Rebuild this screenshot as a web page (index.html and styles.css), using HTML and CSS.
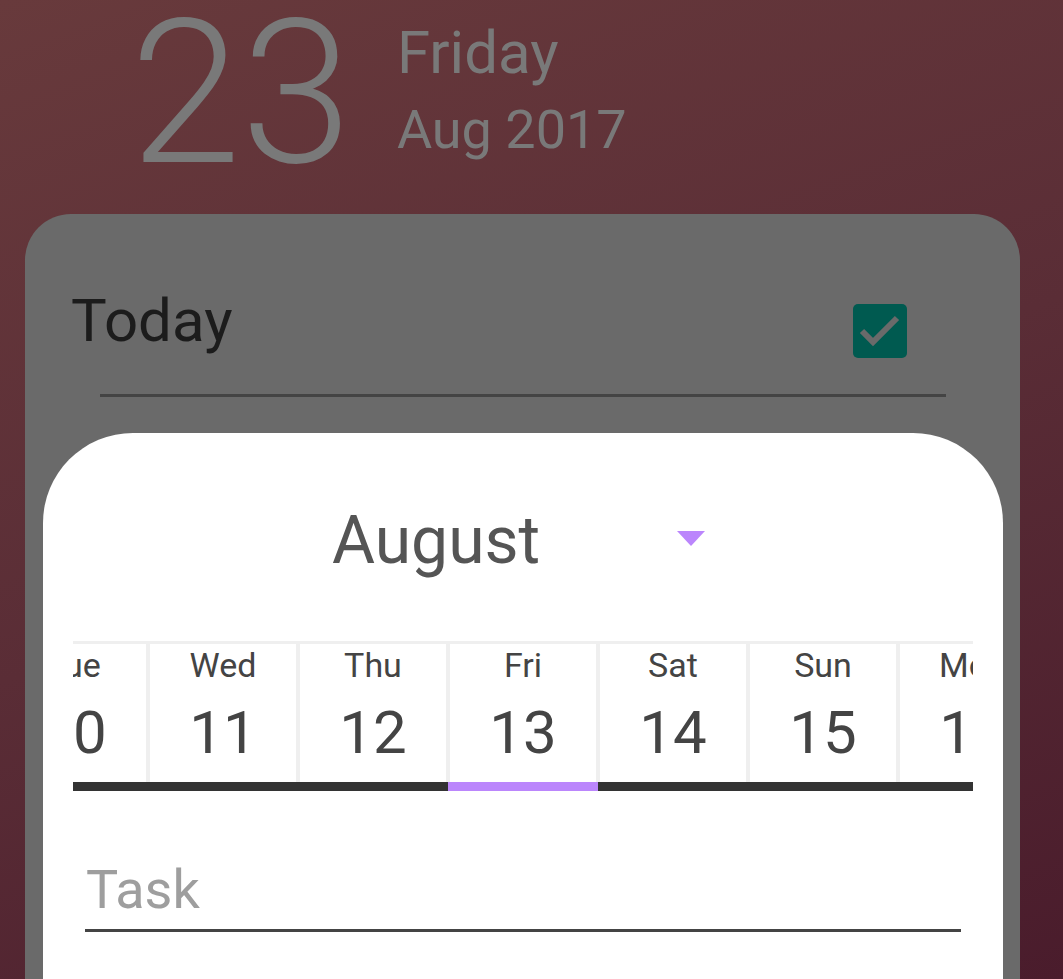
FILE: index.html
```html
<!DOCTYPE html>
<html lang="en">
<head>
<meta charset="utf-8">
<title>Task</title>
<link rel="stylesheet" href="styles.css">
</head>
<body>
<div class="screen">
  <header class="date-header">
    <div class="big-day">23</div>
    <div class="date-meta">
      <div class="weekday">Friday</div>
      <div class="month-year">Aug 2017</div>
    </div>
  </header>
  <section class="card">
    <div class="today-row">
      <div class="today-label">Today</div>
      <div class="checkbox">
        <svg width="54" height="54" viewBox="0 0 54 54"><polyline points="9,27 20,38 44,14" fill="none" stroke="#6a6a6a" stroke-width="6"/></svg>
      </div>
    </div>
    <div class="divider"></div>
    <div class="sheet">
      <div class="month-spinner">
        <span class="month-name">August</span>
        <span class="caret"></span>
      </div>
      <div class="strip">
        <div class="track">
          <div class="day"><div class="day-body"><div class="dname">Tue</div><div class="dnum">10</div></div><div class="bar"></div></div>
          <div class="day"><div class="day-body"><div class="dname">Wed</div><div class="dnum">11</div></div><div class="bar"></div></div>
          <div class="day"><div class="day-body"><div class="dname">Thu</div><div class="dnum">12</div></div><div class="bar"></div></div>
          <div class="day selected"><div class="day-body"><div class="dname">Fri</div><div class="dnum">13</div></div><div class="bar"></div></div>
          <div class="day"><div class="day-body"><div class="dname">Sat</div><div class="dnum">14</div></div><div class="bar"></div></div>
          <div class="day"><div class="day-body"><div class="dname">Sun</div><div class="dnum">15</div></div><div class="bar"></div></div>
          <div class="day"><div class="day-body"><div class="dname">Mon</div><div class="dnum">16</div></div><div class="bar"></div></div>
        </div>
      </div>
      <div class="task-field">
        <div class="task-placeholder">Task</div>
      </div>
    </div>
  </section>
</div>
</body>
</html>
```

FILE: styles.css
```css
* { box-sizing: border-box; }
html, body { margin: 0; padding: 0; }
body {
  font-family: Roboto, "Noto Sans", sans-serif;
  width: 1063px;
  height: 979px;
  overflow: hidden;
}
.screen {
  width: 1063px;
  height: 979px;
  overflow: hidden;
  background: linear-gradient(160deg, #683a3c 0%, #5a2d36 50%, #4a1c2c 100%);
  display: flex;
  flex-direction: column;
}
.date-header {
  height: 214px;
  flex: none;
  display: flex;
  align-items: flex-start;
  padding-left: 130px;
  color: #797979;
}
.big-day {
  font-size: 200px;
  font-weight: 300;
  line-height: 160px;
  margin-top: 14px;
}
.date-meta {
  margin-left: 45px;
  margin-top: 15px;
}
.weekday {
  font-size: 60px;
  line-height: 75px;
}
.month-year {
  font-size: 54px;
  line-height: 75px;
  margin-top: 2px;
}
.card {
  flex: 1;
  margin: 0 43px 0 25px;
  background: #6a6a6a;
  border-radius: 46px 46px 0 0;
  padding-top: 72px;
  display: flex;
  flex-direction: column;
}
.today-row {
  display: flex;
  justify-content: space-between;
  align-items: flex-start;
  padding: 0 113px 0 46px;
}
.today-label {
  font-size: 60px;
  line-height: 70px;
  color: #1c1c1c;
}
.checkbox {
  width: 54px;
  height: 54px;
  margin-top: 18px;
  background: #005a50;
  border-radius: 5px;
}
.checkbox svg { display: block; }
.divider {
  height: 3px;
  background: #444;
  margin: 36px 74px 0 75px;
}
.sheet {
  flex: 1;
  margin: 36px 17px 0 18px;
  background: #fff;
  border-radius: 90px 90px 0 0;
  padding-top: 68px;
}
.month-spinner {
  width: 382px;
  margin: 0 auto;
  display: flex;
  align-items: center;
  justify-content: space-between;
}
.month-name {
  font-size: 66px;
  line-height: 80px;
  color: #555;
}
.caret {
  width: 0;
  height: 0;
  border-left: 14.5px solid transparent;
  border-right: 14.5px solid transparent;
  border-top: 15px solid #bb86fc;
  margin-right: 9px;
  margin-top: -6px;
}
.strip {
  margin: 60px 30px 0 30px;
  overflow: hidden;
  background: #efefef;
  padding-top: 3px;
}
.track {
  display: flex;
  margin-left: -75px;
}
.day {
  flex: none;
  width: 150px;
  display: flex;
  flex-direction: column;
}
.day-body {
  margin: 0 2px;
  height: 138px;
  background: #fff;
  padding-top: 1px;
  text-align: center;
  color: #444;
}
.dname {
  font-size: 34px;
  line-height: 40px;
}
.dnum {
  font-size: 60px;
  line-height: 70px;
  margin-top: 13px;
}
.bar {
  height: 9px;
  background: #333;
}
.day.selected .bar { background: #bb86fc; }
.task-field {
  margin: 67px 42px 0 42px;
  padding-bottom: 7px;
  border-bottom: 3px solid #444;
}
.task-placeholder {
  font-size: 54px;
  line-height: 64px;
  color: #9e9e9e;
  padding-left: 1px;
}
```
